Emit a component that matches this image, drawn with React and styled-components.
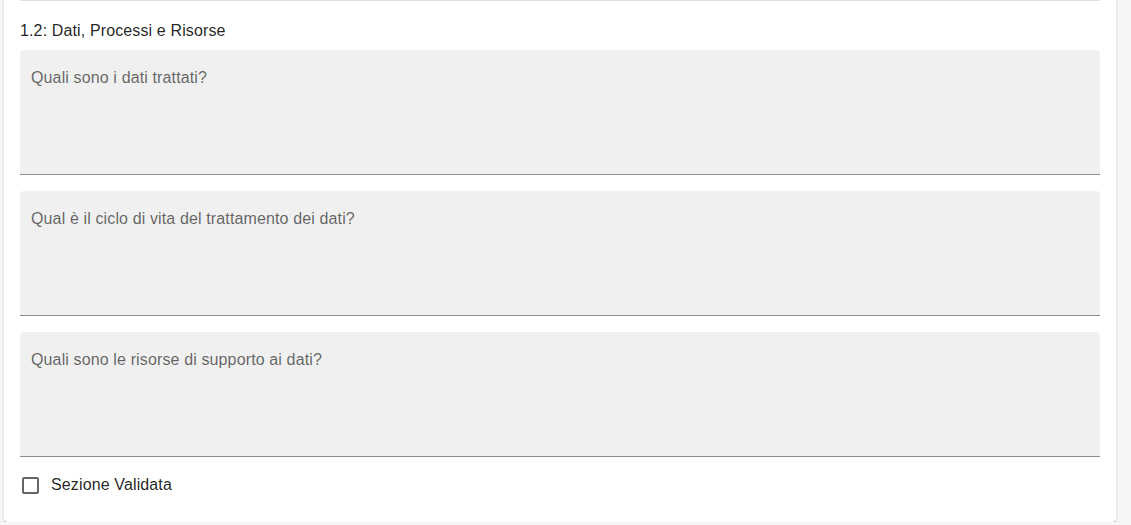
import React, { useState } from 'react';
import styled, { createGlobalStyle } from 'styled-components';

const GlobalStyle = createGlobalStyle`
  html, body {
    margin: 0;
    padding: 0;
    background-color: #f5f5f5;
    font-family: "Liberation Sans", Arial, Helvetica, sans-serif;
    letter-spacing: 0.13px;
  }
`;

const QUESTIONS = [
  'Quali sono i dati trattati?',
  'Qual è il ciclo di vita del trattamento dei dati?',
  'Quali sono le risorse di supporto ai dati?',
];

const App = () => {
  const [checked, setChecked] = useState(false);

  return (
    <Page>
      <GlobalStyle />
      <Card>
        <Divider />
        <Title>1.2: Dati, Processi e Risorse</Title>
        <Fields>
          {QUESTIONS.map(q => (
            <FilledField key={q}>
              <FieldLabel>{q}</FieldLabel>
            </FilledField>
          ))}
        </Fields>
        <CheckRow onClick={() => setChecked(prev => !prev)}>
          <Box $checked={checked}>{checked && '✓'}</Box>
          <CheckLabel>Sezione Validata</CheckLabel>
        </CheckRow>
      </Card>
    </Page>
  );
};

export default App;

const Page = styled.div`
  padding: 0 15px 0 4px;
  overflow: hidden;
`;

const Card = styled.div`
  margin-top: -10px;
  padding: 10px 16px 25px;
  background-color: #fff;
  border-radius: 4px;
  box-shadow: 0px 2px 1px -1px rgb(0 0 0 / 20%), 0px 1px 1px 0px rgb(0 0 0 / 14%),
    0px 1px 3px 0px rgb(0 0 0 / 12%);
`;

const Divider = styled.hr`
  margin: 0;
  border: none;
  height: 1px;
  background-color: rgba(0, 0, 0, 0.12);
`;

const Title = styled.div`
  margin: 18px 0 7px;
  font-size: 16px;
  line-height: 24px;
  color: rgba(0, 0, 0, 0.87);
`;

const Fields = styled.div`
  display: flex;
  flex-direction: column;
  gap: 16px;
`;

const FilledField = styled.div`
  height: 106px;
  padding: 18px 11px 0;
  background-color: rgba(0, 0, 0, 0.06);
  border-top-left-radius: 4px;
  border-top-right-radius: 4px;
  border-bottom: 1px solid rgba(0, 0, 0, 0.42);
`;

const FieldLabel = styled.div`
  font-size: 16px;
  line-height: 19px;
  color: rgba(0, 0, 0, 0.6);
`;

const CheckRow = styled.label`
  display: flex;
  align-items: center;
  gap: 12px;
  margin-top: 16px;
  padding-left: 2px;
  cursor: pointer;
`;

const Box = styled.span`
  width: 13px;
  height: 13px;
  border: 2px solid rgba(0, 0, 0, 0.6);
  border-radius: 2px;
  display: flex;
  align-items: center;
  justify-content: center;
  font-size: 12px;
  color: #fff;
  background-color: ${({ $checked }) => ($checked ? '#1976d2' : 'transparent')};
`;

const CheckLabel = styled.span`
  font-size: 16px;
  line-height: 24px;
  color: rgba(0, 0, 0, 0.87);
`;
